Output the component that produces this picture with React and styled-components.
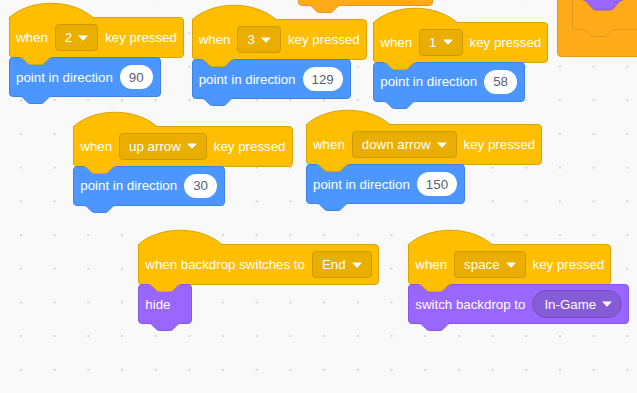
import React from 'react';
import styled, { createGlobalStyle } from 'styled-components';

const GlobalStyle = createGlobalStyle`
  html, body {
    margin: 0;
    padding: 0;
  }
  body {
    font-family: "Liberation Sans", Arial, sans-serif;
  }
  #root {
    width: 100vw;
    height: 100vh;
  }
`;

const palette = {
  event: { fill: '#ffbf00', edge: '#d9a300', field: '#e9ae00', fieldEdge: '#cc9900' },
  motion: { fill: '#4c97ff', edge: '#3d83e6' },
  looks: { fill: '#9966ff', edge: '#8458e6', field: '#855cd6', fieldEdge: '#774dcb' },
  control: { fill: '#ffab19', edge: '#e6971a' },
};

const Workspace = styled.div`
  position: relative;
  width: 100%;
  height: 100%;
  overflow: hidden;
  background-color: #f9f9f9;
  background-image: radial-gradient(circle, #d4d4d4 0.9px, transparent 1.5px);
  background-size: 33.7px 33.7px;
  background-position: 4.15px 16.05px;
`;

const Script = styled.div`
  position: absolute;
  left: ${(p) => p.$x}px;
  top: ${(p) => p.$y}px;
  display: flex;
  flex-direction: column;
  align-items: flex-start;
`;

const Block = styled.div`
  position: relative;
  display: flex;
  align-items: center;
  gap: 7px;
  box-sizing: border-box;
  height: ${(p) => (p.$hat ? 41 : 40)}px;
  min-width: 54px;
  ${(p) => (p.$w ? `width: ${p.$w}px;` : '')}
  padding: 0 6px;
  background: ${(p) => p.$c.fill};
  border: 1px solid ${(p) => p.$c.edge};
  border-radius: ${(p) => (p.$hat ? '0 4px 4px 4px' : '4px')};
  color: #fff;
  font-size: 13.3px;
  white-space: nowrap;

  & + & {
    margin-top: -1px;
  }
`;

const CapSvg = styled.svg`
  position: absolute;
  left: -1px;
  top: -16px;
  overflow: visible;
`;

const TabSvg = styled.svg`
  position: absolute;
  left: 9.5px;
  top: 100%;
  z-index: 2;
  overflow: visible;
`;

const Dropdown = styled.div`
  display: flex;
  align-items: center;
  gap: 6px;
  box-sizing: border-box;
  height: ${(p) => (p.$round ? 28 : 27)}px;
  padding: 0 9px 0 ${(p) => (p.$round ? 11 : 9)}px;
  background: ${(p) => p.$c.field};
  border: 1px solid ${(p) => p.$c.fieldEdge};
  border-radius: ${(p) => (p.$round ? 14 : 4)}px;
`;

const NumberInput = styled.div`
  display: flex;
  align-items: center;
  justify-content: center;
  box-sizing: border-box;
  height: 24px;
  min-width: 32px;
  padding: 0 9px;
  margin-right: 1px;
  background: #fff;
  border-radius: 12px;
  color: #575e75;
`;

const CBlock = styled.div`
  position: absolute;
  left: 557.3px;
  top: -40px;
  width: 100px;
  box-sizing: border-box;
  padding: 0 0 26px 14px;
  background: ${palette.control.fill};
  border: 1px solid ${palette.control.edge};
  border-radius: 4px;
`;

const NestedBlock = styled.div`
  position: relative;
  box-sizing: border-box;
  height: 69px;
  background: ${palette.control.fill};
  border: 1px solid ${palette.control.edge};
  border-top: none;
  border-right: none;
  border-radius: 0 0 0 4px;
`;

const LooseTab = styled.svg`
  position: absolute;
  left: 10px;
  top: 36px;
`;

function HatCap({ c }) {
  return (
    <CapSvg width="84" height="17" viewBox="0 0 84 17">
      <path d="M0 17 V15.5 C22 -3.5 62 -3.5 84 15.5 V17 Z" fill={c.fill} />
      <path d="M0.5 17 V15.5 C22 -3.5 62 -3.5 84 15.5" fill="none" stroke={c.edge} />
    </CapSvg>
  );
}

const notch =
  'c1.75 0 2.625 .875 3.5 1.75 l3.5 3.5 c.875 .875 1.75 1.75 3.5 1.75 h10.5 c1.75 0 2.625 -.875 3.5 -1.75 l3.5 -3.5 c.875 -.875 1.75 -1.75 3.5 -1.75';

function Tab({ c }) {
  return (
    <TabSvg width="32" height="9" viewBox="0 0 32 9">
      <path d={`M0 0 V0.5 ${notch} V0 Z`} fill={c.fill} />
      <path d={`M0 0.5 ${notch}`} fill="none" stroke={c.edge} />
    </TabSvg>
  );
}

function Arrow() {
  return (
    <svg width="10" height="6" viewBox="0 0 10 6">
      <path
        d="M1 0.4 H9 Q10 0.4 9.3 1.2 L5.6 5.2 Q5 5.8 4.4 5.2 L0.7 1.2 Q0 0.4 1 0.4 Z"
        fill="#fff"
      />
    </svg>
  );
}

function Menu({ c, round, children }) {
  return (
    <Dropdown $c={c} $round={round}>
      <span>{children}</span>
      <Arrow />
    </Dropdown>
  );
}

function KeyHat({ keyName }) {
  return (
    <Block $hat $c={palette.event}>
      <HatCap c={palette.event} />
      <span>when</span>
      <Menu c={palette.event}>{keyName}</Menu>
      <span>key pressed</span>
      <Tab c={palette.event} />
    </Block>
  );
}

const directionScripts = [
  { x: 9, y: 17, keyName: '2', dir: '90' },
  { x: 191.7, y: 19, keyName: '3', dir: '129' },
  { x: 373.3, y: 21.7, keyName: '1', dir: '58' },
  { x: 73.3, y: 125.7, keyName: 'up arrow', dir: '30' },
  { x: 306, y: 124, keyName: 'down arrow', dir: '150' },
];

export default function App() {
  return (
    <>
      <GlobalStyle />
      <Workspace>
        <Script $x={298.3} $y={-34}>
          <Block $c={palette.control} $w={135}>
            <Tab c={palette.control} />
          </Block>
        </Script>

        <CBlock>
          <NestedBlock>
            <LooseTab width="40" height="14" viewBox="0 0 40 14">
              <path
                d="M0 0 V3 Q2 3 3.2 4.2 L9.8 11.6 Q11 13 13 13 H27 Q29 13 30.2 11.6 L36.8 4.2 Q38 3 40 3 V0 Z"
                fill={palette.looks.fill}
                stroke={palette.looks.edge}
              />
            </LooseTab>
            <Tab c={palette.control} />
          </NestedBlock>
        </CBlock>

        {directionScripts.map((s) => (
          <Script key={s.keyName} $x={s.x} $y={s.y}>
            <KeyHat keyName={s.keyName} />
            <Block $c={palette.motion}>
              <span>point in direction</span>
              <NumberInput>{s.dir}</NumberInput>
              <Tab c={palette.motion} />
            </Block>
          </Script>
        ))}

        <Script $x={138.3} $y={244}>
          <Block $hat $c={palette.event}>
            <HatCap c={palette.event} />
            <span>when backdrop switches to</span>
            <Menu c={palette.event}>End</Menu>
            <Tab c={palette.event} />
          </Block>
          <Block $c={palette.looks}>
            <span>hide</span>
            <Tab c={palette.looks} />
          </Block>
        </Script>

        <Script $x={408.3} $y={244}>
          <KeyHat keyName="space" />
          <Block $c={palette.looks}>
            <span>switch backdrop to</span>
            <Menu c={palette.looks} round>
              In-Game
            </Menu>
            <Tab c={palette.looks} />
          </Block>
        </Script>
      </Workspace>
    </>
  );
}
